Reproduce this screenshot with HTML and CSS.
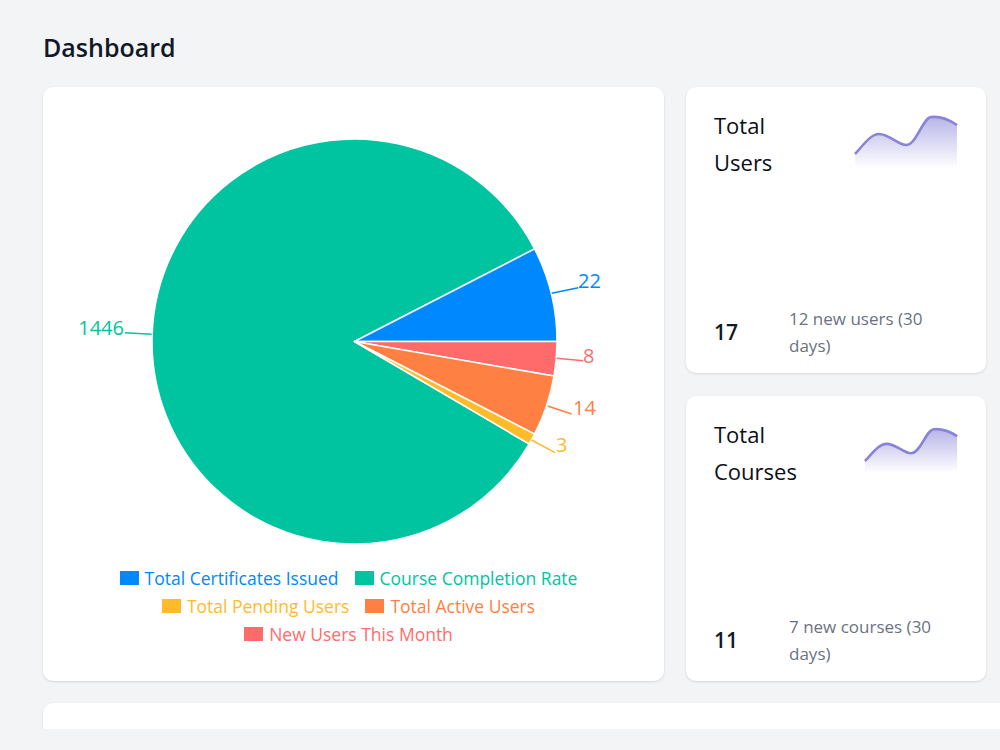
FILE: index.html
```html
<!DOCTYPE html>
<html lang="en">
<head>
  <meta charset="UTF-8">
  <meta name="viewport" content="width=device-width, initial-scale=1.0">
  <title>Dashboard</title>
  <link rel="stylesheet" href="styles.css">
</head>
<body>
  <main class="page">
    <h1 class="page-title">Dashboard</h1>

    <div class="top-grid">
      <!-- Overview pie -->
      <section class="card chart-card">
        <svg class="pie" width="621" height="477" viewBox="0 0 621 477">
          <g stroke="#fff" stroke-width="1.5" stroke-linejoin="round">
            <path fill="#00C49F" d="M311.5,254.5 L486.2,357.0 A202.5,202.5 0 1,1 491.6,161.9 Z"/>
            <path fill="#0088FE" d="M311.5,254.5 L491.6,161.9 A202.5,202.5 0 0,1 514,254.5 Z"/>
            <path fill="#FF6B6B" d="M311.5,254.5 L514,254.5 A202.5,202.5 0 0,1 511.0,289.1 Z"/>
            <path fill="#FF8042" d="M311.5,254.5 L511.0,289.1 A202.5,202.5 0 0,1 491.6,347.1 Z"/>
            <path fill="#FFBB28" d="M311.5,254.5 L491.6,347.1 A202.5,202.5 0 0,1 486.2,357.0 Z"/>
          </g>
          <!-- label leader lines -->
          <g fill="none" stroke-width="1.5">
            <path stroke="#0088FE" d="M508.7,206.3 L535.3,200.7"/>
            <path stroke="#FF6B6B" d="M513.7,271.3 L540.3,273.7"/>
            <path stroke="#FF8042" d="M504.7,319 L528.7,327"/>
            <path stroke="#FFBB28" d="M488.7,353 L512,365.7"/>
            <path stroke="#00C49F" d="M82,245.7 L108.7,247.3"/>
          </g>
          <g class="pie-label" dominant-baseline="central">
            <text x="535" y="193" fill="#0088FE">22</text>
            <text x="540" y="268" fill="#FF6B6B">8</text>
            <text x="530" y="320.5" fill="#FF8042">14</text>
            <text x="513" y="357.5" fill="#FFBB28">3</text>
            <text x="81" y="240" fill="#00C49F" text-anchor="end">1446</text>
          </g>
        </svg>

        <div class="legend">
          <div class="legend-row">
            <span class="legend-item blue"><i class="swatch"></i>Total Certificates Issued</span>
            <span class="legend-item green"><i class="swatch"></i>Course Completion Rate</span>
          </div>
          <div class="legend-row">
            <span class="legend-item yellow"><i class="swatch"></i>Total Pending Users</span>
            <span class="legend-item orange"><i class="swatch"></i>Total Active Users</span>
          </div>
          <div class="legend-row">
            <span class="legend-item red"><i class="swatch"></i>New Users This Month</span>
          </div>
        </div>
      </section>

      <div class="stat-col">
        <section class="card stat-card">
          <div class="stat-head">
            <h2 class="stat-title">Total Users</h2>
            <svg class="spark" width="104" height="56" viewBox="0 0 100 56" preserveAspectRatio="none">
              <defs>
                <linearGradient id="sparkFillA" x1="0" y1="0" x2="0" y2="1">
                  <stop offset="0" stop-color="#8884d8" stop-opacity="0.6"/>
                  <stop offset="1" stop-color="#8884d8" stop-opacity="0"/>
                </linearGradient>
              </defs>
              <path fill="url(#sparkFillA)" d="M1,42 C9,33 16,22 24,22 C34,22 42,33 50,33 C60,33 66,6 74,5 C83,4 92,8 99,13 L99,56 L1,56 Z"/>
              <path class="spark-line" d="M1,42 C9,33 16,22 24,22 C34,22 42,33 50,33 C60,33 66,6 74,5 C83,4 92,8 99,13"/>
            </svg>
          </div>
          <div class="stat-foot">
            <span class="stat-num">17</span>
            <span class="stat-note">12 new users (30 days)</span>
          </div>
        </section>

        <section class="card stat-card">
          <div class="stat-head">
            <h2 class="stat-title">Total Courses</h2>
            <svg class="spark" width="94" height="48" viewBox="0 0 100 56" preserveAspectRatio="none">
              <defs>
                <linearGradient id="sparkFillB" x1="0" y1="0" x2="0" y2="1">
                  <stop offset="0" stop-color="#8884d8" stop-opacity="0.6"/>
                  <stop offset="1" stop-color="#8884d8" stop-opacity="0"/>
                </linearGradient>
              </defs>
              <path fill="url(#sparkFillB)" d="M1,42 C9,33 16,22 24,22 C34,22 42,33 50,33 C60,33 66,6 74,5 C83,4 92,8 99,13 L99,56 L1,56 Z"/>
              <path class="spark-line" d="M1,42 C9,33 16,22 24,22 C34,22 42,33 50,33 C60,33 66,6 74,5 C83,4 92,8 99,13"/>
            </svg>
          </div>
          <div class="stat-foot">
            <span class="stat-num">11</span>
            <span class="stat-note">7 new courses (30 days)</span>
          </div>
        </section>
      </div>
    </div>

    <section class="card table-card"></section>
  </main>
</body>
</html>
```

FILE: styles.css
```css
html, body {
  margin: 0;
  overflow: hidden;
}
body {
  font-family: "Open Sans", "Noto Sans", sans-serif;
  background-color: #f3f4f6;
  color: #111827;
  height: 750px;
}
.page {
  padding: 32px 0 0 43px;
  height: 697px;
  overflow: hidden;
}
.page-title {
  margin: 0 0 25px;
  font-size: 25px;
  line-height: 30px;
  font-weight: 600;
}
.top-grid {
  display: grid;
  grid-template-columns: 621px 300px;
  gap: 22px;
}
.card {
  background: white;
  border-radius: 10px;
  box-shadow: 0 1px 3px rgba(0,0,0,0.09), 0 1px 2px rgba(0,0,0,0.04);
}
.chart-card {
  height: 594px;
  box-sizing: border-box;
}
.pie {
  display: block;
}
.pie-label {
  font-size: 20px;
}
.legend {
  display: flex;
  flex-direction: column;
  align-items: center;
  font-size: 17.5px;
}
.legend-row {
  display: flex;
  gap: 6px;
  line-height: 28px;
}
.legend-item {
  display: flex;
  align-items: center;
  margin-right: 10px;
}
.swatch {
  display: inline-block;
  width: 19px;
  height: 14px;
  margin-right: 6px;
  background: currentColor;
}
.blue { color: #0088FE; }
.green { color: #00C49F; }
.yellow { color: #FFBB28; }
.orange { color: #FF8042; }
.red { color: #FF6B6B; }
.stat-col {
  display: flex;
  flex-direction: column;
  gap: 23px;
}
.stat-card {
  flex: 1;
  display: flex;
  flex-direction: column;
  justify-content: space-between;
  padding: 20px 28px 14px 28px;
  height: 285px;
  box-sizing: border-box;
}
.stat-head {
  display: flex;
  justify-content: space-between;
  align-items: center;
}
.stat-title {
  margin: 0;
  font-size: 22px;
  line-height: 37.4px;
  font-weight: 500;
  color: #0b0f19;
  width: 110px;
}
.spark {
  display: block;
  margin-bottom: 8px;
}
.spark-line {
  fill: none;
  stroke: #8884d8;
  stroke-width: 2.6;
  vector-effect: non-scaling-stroke;
}
.stat-foot {
  display: flex;
  align-items: center;
  gap: 51px;
}
.stat-num {
  font-size: 21px;
  font-weight: 600;
}
.stat-note {
  flex: 1;
  font-size: 17px;
  line-height: 27px;
  color: #6b7280;
}
.table-card {
  margin-top: 22px;
  width: 1000px;
  height: 26px;
  border-radius: 10px 10px 0 0;
}
```
